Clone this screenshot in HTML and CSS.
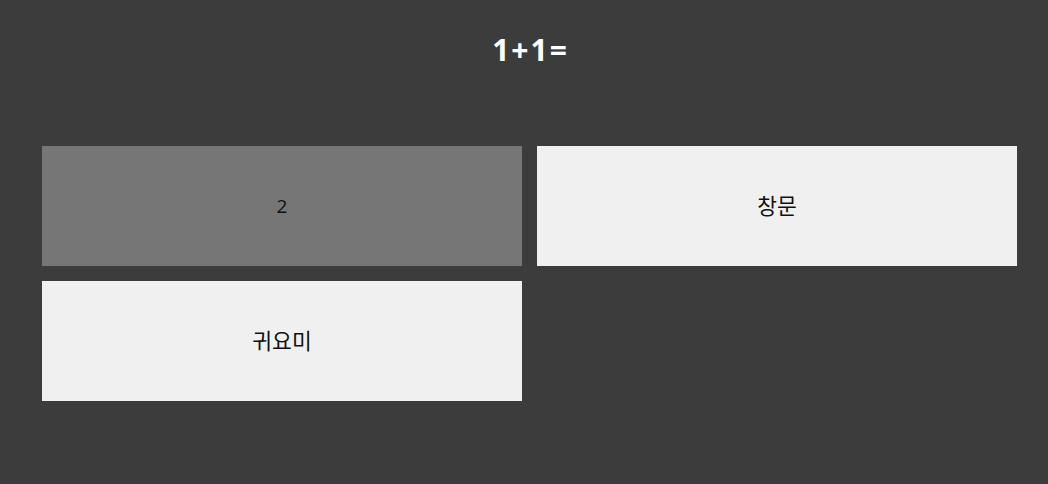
FILE: index.html
```html
<!DOCTYPE html>
<html lang="ko">
<head>
<meta charset="utf-8">
<link rel="stylesheet" href="styles.css">
</head>
<body>
<main class="quiz">
  <h1 class="question">1+1=</h1>
  <div class="choices">
    <button class="choice choice--selected">2</button>
    <button class="choice choice--ko">창문</button>
    <button class="choice choice--ko">귀요미</button>
  </div>
</main>
</body>
</html>
```
FILE: styles.css
```css
html, body {
  margin: 0;
  padding: 0;
  background: #3c3c3c;
}
body {
  font-family: "Open Sans", "Noto Sans CJK KR", sans-serif;
}
.quiz {
  width: 975px;
  margin-left: 42px;
  padding-top: 30px;
}
.question {
  margin: 0;
  height: 40px;
  line-height: 40px;
  text-align: center;
  color: #ffffff;
  font-size: 30px;
  font-weight: 700;
  letter-spacing: 2px;
  text-indent: 2px;
}
.choices {
  margin-top: 76px;
  display: grid;
  grid-template-columns: 480px 480px;
  grid-auto-rows: 120px;
  gap: 15px;
}
.choice {
  border: none;
  margin: 0;
  padding: 0;
  background: #f0f0f0;
  color: #111;
  font-family: "Open Sans", "Noto Sans CJK KR", sans-serif;
  font-size: 19px;
}
.choice--ko {
  font-size: 21.5px;
  padding-bottom: 4px;
}
.choice--selected {
  background: #767676;
}
```
